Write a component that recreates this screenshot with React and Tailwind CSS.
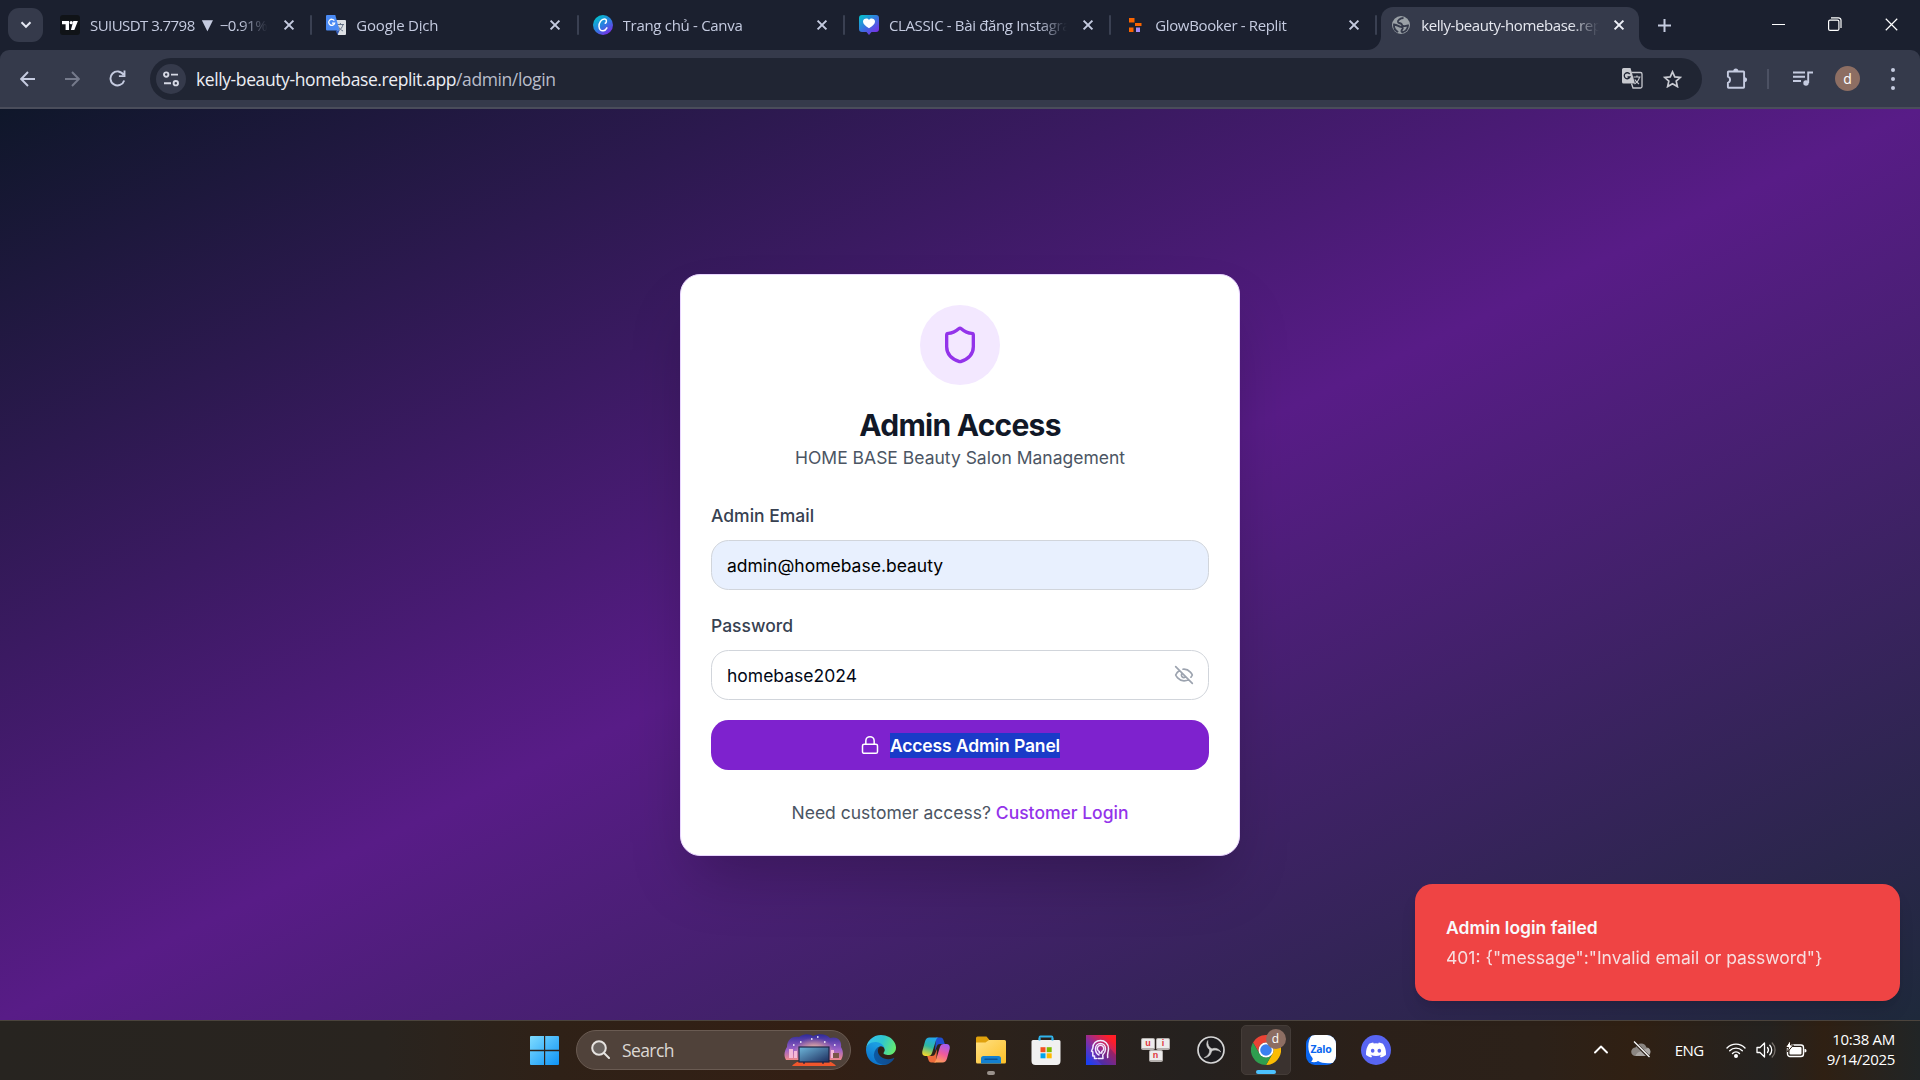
import React from "react";

const sys = "font-['Open_Sans','Noto_Sans',sans-serif]";

function Cross({ s = 10, w = 2, color = "#c5cbe0" }) {
  return (
    <svg width={s} height={s} viewBox="0 0 10 10" fill="none" stroke={color} strokeWidth={w} className="shrink-0 overflow-visible">
      <path d="M0.6 0.6L9.4 9.4M9.4 0.6L0.6 9.4" />
    </svg>
  );
}

function TradingViewIcon() {
  return (
    <svg width="20" height="20" viewBox="0 0 20 20">
      <rect width="20" height="20" rx="3" fill="#101317" />
      <path d="M2 6h7v9H5.600V9.300H2zM13.300 6h4.600l-3.600 9h-3.400z" fill="#fff" />
      <circle cx="11.200" cy="7.700" r="1.600" fill="#fff" />
    </svg>
  );
}

function TranslateIcon() {
  return (
    <svg width="20" height="20" viewBox="0 0 20 20">
      <path d="M8 5h11a1 1 0 0 1 1 1v13a1 1 0 0 1-1 1h-7z" fill="#dcdfe3" />
      <path d="M11 9.500h7M14.400 8v1.500M17 9.500c-.6 3-2.500 5-4.500 6.200M12.300 11.500c1 2 2.700 3.500 4.700 4.500" stroke="#667386" fill="none" strokeWidth="1" />
      <path d="M1 0h8.300l4.200 15.500H1a1 1 0 0 1-1-1V1a1 1 0 0 1 1-1z" fill="#4a8af4" />
      <path d="M9.500 15.500h4L11.500 20z" fill="#3056b0" />
      <path d="M8.300 5.700A3 3 0 1 0 8.600 8.200H6" stroke="#fff" strokeWidth="1.300" fill="none" />
    </svg>
  );
}

function CanvaIcon() {
  return (
    <svg width="20" height="20" viewBox="0 0 20 20">
      <defs>
        <linearGradient id="cv" x1="0.1" y1="0.1" x2="0.75" y2="1">
          <stop offset="0" stopColor="#00c4cc" />
          <stop offset="0.5" stopColor="#2a7fe0" />
          <stop offset="1" stopColor="#7d2ae8" />
        </linearGradient>
      </defs>
      <circle cx="10" cy="10" r="10" fill="url(#cv)" />
      <path d="M12.200 8.300c1.500-.6 2-4.300-.8-4.300C8.300 4 5.800 8 6 11.500c.2 3.200 2.200 4.600 4.200 4.300 1.800-.3 3-1.600 3.700-3" stroke="#fff" strokeWidth="1.500" fill="none" strokeLinecap="round" />
    </svg>
  );
}

function HeartIcon() {
  return (
    <svg width="20" height="20" viewBox="0 0 20 20">
      <defs>
        <linearGradient id="hc" x1="0" y1="0" x2="0.8" y2="1">
          <stop offset="0" stopColor="#00c9cc" />
          <stop offset="0.55" stopColor="#3b70e0" />
          <stop offset="1" stopColor="#7d2ae8" />
        </linearGradient>
      </defs>
      <path d="M3 0h14a3 3 0 0 1 3 3v11a3 3 0 0 1-3 3h-4.500L10 20l-2.500-3H3a3 3 0 0 1-3-3V3a3 3 0 0 1 3-3z" fill="url(#hc)" />
      <path d="M10 13.300C6 10.500 4 8.800 4 6.500 4 3.500 8.300 2.300 10 5c1.700-2.700 6-1.500 6 1.500 0 2.300-2 4-6 6.800z" fill="#fff" />
    </svg>
  );
}

function ReplitIcon() {
  return (
    <svg width="20" height="20" viewBox="0 0 20 20">
      <path d="M4 3h5.500v4.500H4zM10 8h6.500v3H10zM4 12.500h4.500V17H4z" fill="#fa6400" />
      <rect x="11" y="12.500" width="4" height="4.500" fill="#a78bfa" />
    </svg>
  );
}

function GlobeIcon() {
  return (
    <svg width="18" height="18" viewBox="0 0 18 18">
      <circle cx="9" cy="9" r="9" fill="#9aa0a6" />
      <path d="M11.500 2C8 2.200 5.500 4.200 6 6c.5 1.500 2.200 1 3.200 1.700C10.500 8.700 9.500 9.500 11 10c1.800.6 3.200-.6 5-.5-.3 3.300-2.500 6-5.800 6.700C8.800 15.500 9.700 14 10.500 13c.8-1.300-.3-2.200-1.800-2.300C6.500 10.500 5.500 8.800 2 8.500 1.700 12 3.500 14.800 6.200 16" fill="none" stroke="#353a4b" strokeWidth="1.900" />
    </svg>
  );
}

function Tab({ icon, title, cls }) {
  return (
    <div className="flex h-[34px] w-[266.3px] shrink-0 items-center pl-[14px]">
      <div className="flex w-5 shrink-0 justify-center">{icon}</div>
      <div className="ml-[10px] w-[178px] overflow-hidden [mask-image:linear-gradient(90deg,#000_84%,transparent)]">
        <span className={`block whitespace-nowrap text-[15px] leading-[22px] text-[#c5cbe0] ${cls}`}>{title}</span>
      </div>
      <div className="ml-4 flex"><Cross /></div>
      <div className="ml-auto h-5 w-[2px] rounded bg-[#3a4052]" />
    </div>
  );
}

function TabStrip() {
  return (
    <div className="flex h-[50px] shrink-0 items-center bg-[#1b202f]">
      <div className="ml-2 flex h-[34px] w-[35px] shrink-0 items-center justify-center rounded-[11px] bg-[#353a4b]">
        <svg width="12" height="8" viewBox="0 0 12 8" fill="none" stroke="#e4e7f2" strokeWidth="2"><path d="M1.500 1.300L6 5.800l4.500-4.500" /></svg>
      </div>
      <div className="ml-[3px] flex">
        <Tab icon={<TradingViewIcon />} title={<>SUIUSDT 3.7798 <span className="text-[19px] leading-none">▼</span> −0.91%</>} cls="tracking-[-0.55px]" />
        <Tab icon={<TranslateIcon />} title="Google Dịch" cls="tracking-[-0.2px]" />
        <Tab icon={<CanvaIcon />} title="Trang chủ - Canva" cls="tracking-[-0.3px]" />
        <Tab icon={<HeartIcon />} title="CLASSIC - Bài đăng Instagram" cls="tracking-[-0.35px]" />
        <div className="w-[263px]"><Tab icon={<ReplitIcon />} title="GlowBooker - Replit" cls="tracking-[-0.35px]" /></div>
      </div>
      <div className="relative z-10 ml-[7px] mt-[7px] flex h-[43px] w-[258px] shrink-0 items-center rounded-t-[12px] bg-[#353a4b] pb-[7px] pl-[11px]">
        <svg className="absolute bottom-0 left-[-14px]" width="14" height="14"><path d="M14 0v14H0A14 14 0 0 0 14 0z" fill="#353a4b" /></svg>
        <svg className="absolute bottom-0 right-[-14px]" width="14" height="14"><path d="M0 0v14H14A14 14 0 0 1 0 0z" fill="#353a4b" /></svg>
        <GlobeIcon />
        <div className="ml-[11px] w-[178px] overflow-hidden [mask-image:linear-gradient(90deg,#000_84%,transparent)]">
          <span className="block whitespace-nowrap text-[15px] leading-[22px] tracking-[-0.4px] text-[#e6e8f0]">kelly-beauty-homebase.replit.app</span>
        </div>
        <div className="ml-[15px] flex"><Cross color="#eef0f8" /></div>
      </div>
      <svg className="ml-[19px] shrink-0" width="13" height="13" viewBox="0 0 13 13" stroke="#c5cbe0" strokeWidth="2"><path d="M6.500 0v13M0 6.500h13" /></svg>
      <div className="ml-auto mr-[22px] flex items-center gap-[43px] pb-[2px]">
        <svg width="13" height="13" viewBox="0 0 13 13" stroke="#fff"><path d="M0 6.500h13" /></svg>
        <svg width="14" height="14" viewBox="0 0 14 14" fill="none" stroke="#fff" strokeWidth="1.200"><rect x="0.600" y="3.100" width="10.300" height="10.300" rx="1.500" /><path d="M3 .8h7.500a2.500 2.500 0 0 1 2.500 2.500V11" /></svg>
        <Cross s={13} w={0.9} color="#fff" />
      </div>
    </div>
  );
}

function Toolbar() {
  return (
    <div className="shrink-0 bg-[#1b202f]">
    <div className="flex h-[59px] items-center rounded-t-[9px] border-b-2 border-[#4a4d5b] bg-[#353a4b]">
      <svg className="ml-5 shrink-0" width="15" height="16" viewBox="0 0 15 16" fill="none" stroke="#c5cbe0" strokeWidth="1.900"><path d="M15 8H1.500M8 1L1.200 8 8 15" /></svg>
      <svg className="ml-[30px] shrink-0" width="15" height="16" viewBox="0 0 15 16" fill="none" stroke="#757a8b" strokeWidth="1.900"><path d="M0 8h13.500M7 1l6.800 7L7 15" /></svg>
      <svg className="ml-[29px] shrink-0" width="17" height="17" viewBox="0 0 17 17" fill="none" stroke="#c5cbe0" strokeWidth="1.900"><path d="M15.200 10.500A7 7 0 1 1 14.500 4.800M15.500 0.500v5.600H9.900" /></svg>
      <div className="ml-[24px] flex h-[42px] w-[1552px] shrink-0 items-center rounded-full bg-[#202533] pl-[6px]">
        <div className="flex size-[30px] items-center justify-center rounded-full bg-[#353a4b]">
          <svg width="16" height="16" viewBox="0 0 16 16" fill="none" stroke="#d5d8e4" strokeWidth="1.900"><circle cx="3.200" cy="3.600" r="2.200" /><path d="M8 3.600h7M1 12.200h7" /><circle cx="12.800" cy="12.200" r="2.200" /></svg>
        </div>
        <div className="ml-[10px] whitespace-nowrap pt-px text-[17.5px] leading-6 tracking-[-0.4px] text-[#eceef4]">kelly-beauty-homebase.replit.app<span className="text-[#b9bdca]">/admin/login</span></div>
        <svg className="ml-auto shrink-0" width="21" height="21" viewBox="0 0 21 21">
          <path d="M1.500 0h7l4.500 15.500H1.500A1.500 1.500 0 0 1 0 14V1.500A1.500 1.500 0 0 1 1.500 0z" fill="#c7c9cf" />
          <path d="M7.700 6A3 3 0 1 0 8 9H5.500" stroke="#202533" strokeWidth="1.300" fill="none" />
          <path d="M9.500 4.500h9a1.500 1.500 0 0 1 1.500 1.500v12.500a1.500 1.500 0 0 1-1.500 1.500h-7.500l-1.500-4.500" fill="none" stroke="#c7c9cf" strokeWidth="1.300" />
          <path d="M11.500 9h7M15 7.500V9M17.500 9c-.5 3-2.500 5.300-5 7M12.800 11.500c1 1.900 2.500 3.300 4.200 4.500" stroke="#c7c9cf" strokeWidth="1.200" fill="none" />
        </svg>
        <svg className="ml-[20px] mr-[20px] shrink-0" width="19" height="18" viewBox="0 0 19 18" fill="none" stroke="#c9cbd2" strokeWidth="1.700"><path d="M9.500 1.800l2.300 5.100 5.600.5-4.200 3.700 1.200 5.500-4.900-2.900-4.900 2.900 1.200-5.500-4.200-3.700 5.600-.5z" /></svg>
      </div>
      <svg className="ml-6 shrink-0" width="22" height="22" viewBox="0 0 22 22" fill="none" stroke="#c5cbe0" strokeWidth="1.900"><path d="M3 3.500h14.500a.6.6 0 0 1 .6.600v15a.6.6 0 0 1-.6.600H2.500a.6.6 0 0 1-.6-.6v-4.300a3.300 3.300 0 0 0 0-6.200V4.100a.6.6 0 0 1 .6-.6z" /><path d="M7.300 3a2.500 2.500 0 0 1 5 0zM18.600 9.200a2.500 2.500 0 0 1 0 5z" fill="#c5cbe0" stroke="none" /></svg>
      <div className="ml-[19px] h-5 w-[2px] bg-[#4c5163]" />
      <svg className="ml-[24px] shrink-0" width="20" height="16" viewBox="0 0 20 16" fill="none" stroke="#c5cbe0" strokeWidth="1.900"><path d="M0 1.500h12M0 5.800h12M0 10h8" /><path d="M15.200 12V1.500H20" /><circle cx="13" cy="12" r="2.700" fill="#c5cbe0" stroke="none" /></svg>
      <div className="ml-[22px] flex size-[25px] shrink-0 items-center justify-center rounded-full bg-[#8d6e63] text-[14px] leading-none text-white">d</div>
      <div className="ml-[31px] flex flex-col gap-[5px]">
        {[0, 1, 2].map((i) => <div key={i} className="size-1 rounded-full bg-[#c5cbe0]" />)}
      </div>
    </div>
    </div>
  );
}

function LoginCard() {
  return (
    <div className="flex h-[582px] w-[560px] flex-col items-center rounded-[20px] border border-[#e9d5ff] bg-white px-[30px] pt-[30px] shadow-[0_31px_62px_-15px_rgba(0,0,0,0.25)]">
      <div className="flex size-20 shrink-0 items-center justify-center rounded-full bg-[#f3e8ff]">
        <svg width="40" height="40" viewBox="0 0 24 24" fill="none" stroke="#9333ea" strokeWidth="2" strokeLinecap="round" strokeLinejoin="round"><path d="M20 13c0 5-3.500 7.500-7.660 8.950a1 1 0 0 1-.67-.01C7.500 20.500 4 18 4 13V6a1 1 0 0 1 1-1c2 0 4.500-1.200 6.240-2.720a1.170 1.170 0 0 1 1.520 0C14.510 3.810 17 5 19 5a1 1 0 0 1 1 1z" /></svg>
      </div>
      <h1 className="mt-5 text-[30px] font-bold leading-[40px] tracking-[-0.75px] text-[#111827]">Admin Access</h1>
      <p className="text-[17.5px] leading-[25px] text-[#4b5563]">HOME BASE Beauty Salon Management</p>
      <label className="mt-[33px] self-start text-[17.5px] font-medium leading-[25px] text-[#374151]">Admin Email</label>
      <div className="mt-3 flex h-[50px] w-full items-center rounded-[17.5px] border border-[#d1d5db] bg-[#e8f0fe] px-[15px] pt-[2px] text-[17.5px] text-black">admin@homebase.beauty</div>
      <label className="mt-[23px] self-start text-[17.5px] font-medium leading-[25px] text-[#374151]">Password</label>
      <div className="mt-3 flex h-[50px] w-full items-center justify-between rounded-[17.5px] border border-[#d1d5db] bg-white pl-[15px] pr-[14px] text-[17.5px] text-[#020817]">
        <span className="pt-[2px]">homebase2024</span>
        <svg width="20" height="20" viewBox="0 0 24 24" fill="none" stroke="#9ca3af" strokeWidth="2" strokeLinecap="round" strokeLinejoin="round"><path d="M9.880 9.880a3 3 0 1 0 4.240 4.240M10.730 5.080A10.430 10.430 0 0 1 12 5c7 0 10 7 10 7a13.160 13.160 0 0 1-1.670 2.680M6.610 6.610A13.526 13.526 0 0 0 2 12s3 7 10 7a9.740 9.740 0 0 0 5.390-1.610M2 2l20 20" /></svg>
      </div>
      <button className="mt-5 flex h-[50px] w-full items-center justify-center gap-[10px] rounded-[17.5px] bg-[#7e22ce] text-[17.5px] font-semibold text-white">
        <svg width="20" height="20" viewBox="0 0 24 24" fill="none" stroke="#fff" strokeWidth="1.800" strokeLinecap="round" strokeLinejoin="round"><rect width="18" height="11" x="3" y="11" rx="2" /><path d="M7 11V7a5 5 0 0 1 10 0v4" /></svg>
        <span className="bg-[#1a3bc8] leading-[25px] tracking-[-0.13px]">Access Admin Panel</span>
      </button>
      <p className="mt-[30px] text-[17.5px] leading-[25px] text-[#4b5563]">Need customer access? <span className="font-medium text-[#9333ea]">Customer Login</span></p>
    </div>
  );
}

function Toast() {
  return (
    <div className="absolute right-5 bottom-[19px] h-[117px] w-[485px] rounded-[17.5px] bg-[#ef4444] pl-[31px] pt-[31px] text-[#f8fafc] shadow-[0_12px_19px_-4px_rgba(0,0,0,0.1),0_5px_8px_-5px_rgba(0,0,0,0.1)]">
      <div className="text-[17.5px] font-semibold leading-[25px]">Admin login failed</div>
      <div className="mt-[5px] text-[17.5px] leading-[25px] opacity-85">401: {'{"message":"Invalid email or password"}'}</div>
    </div>
  );
}

function SearchArt() {
  return (
    <svg width="59" height="32" viewBox="0 0 59 32">
      <defs>
        <linearGradient id="sa" x1="0" y1="0" x2="0" y2="1"><stop offset="0" stopColor="#2d2a98" /><stop offset="0.6" stopColor="#9c62c8" /><stop offset="1" stopColor="#f08a8a" /></linearGradient>
        <radialGradient id="sg" cx="0.5" cy="0.6" r="0.5"><stop offset="0" stopColor="#ffd9a8" /><stop offset="1" stopColor="#ffb080" stopOpacity="0" /></radialGradient>
        <linearGradient id="st" x1="0" y1="0" x2="1" y2="1"><stop offset="0" stopColor="#6fb8dc" /><stop offset="1" stopColor="#1c2c5c" /></linearGradient>
      </defs>
      <path d="M2 26C-1 21 1 16 3 13 3 5 9 2 15 3c5-4 11-3 14-1 6-3 14-2 17 2 7-2 12 2 11 9 3 5 2 10 0 13z" fill="url(#sa)" />
      <ellipse cx="30" cy="14" rx="20" ry="13" fill="url(#sg)" />
      <path d="M5 15h4v9H5zM10 17h3v7h-3zM47 16h3v8h-3z" fill="#f4b8d8" />
      <path d="M49 19h6v5h-6z" fill="#7a5648" />
      <path d="M8 32c3-4 8-6 22-6s19 2 22 6z" fill="#f0562c" />
      <rect x="15" y="13" width="30" height="15" fill="url(#st)" stroke="#1c2344" strokeWidth="1.200" />
      <path d="M20 28v1.800M39 28v1.800" stroke="#1c2344" strokeWidth="1.500" />
      <path d="M16 8h1.500M27 5h1.500M33 3h1.500M40 8h1.500M50 11h1.500M9 11h1.500" stroke="#fff" strokeWidth="1.500" />
    </svg>
  );
}

function EdgeLogo() {
  return (
    <svg width="30" height="30" viewBox="0 0 256 256">
      <defs>
        <linearGradient id="e1" x1="0" y1="0.5" x2="1" y2="0.5"><stop offset="0" stopColor="#0c59a4" /><stop offset="1" stopColor="#114a8b" /></linearGradient>
        <linearGradient id="e2" x1="0.6" y1="0.2" x2="0.2" y2="1"><stop offset="0" stopColor="#1b9de2" /><stop offset="1" stopColor="#0a6cc8" /></linearGradient>
        <linearGradient id="e3" x1="0" y1="0.3" x2="1" y2="0.6"><stop offset="0" stopColor="#35c1f1" /><stop offset="0.5" stopColor="#2fc6cf" /><stop offset="1" stopColor="#66eb6e" /></linearGradient>
      </defs>
      <path d="M235.700 195.500a93.700 93.700 0 0 1-10.600 4.700 101.900 101.900 0 0 1-35.900 6.400c-47.300 0-88.500-32.500-88.500-74.300a31.500 31.500 0 0 1 16.400-27.300c-42.800 1.800-53.800 46.400-53.800 72.500 0 74 68.100 81.400 82.800 81.400 7.900 0 19.800-2.300 27-4.600l1.300-.4a128.300 128.300 0 0 0 66.600-52.800 4 4 0 0 0-5.300-5.600z" fill="url(#e1)" />
      <path d="M105.700 241.400A79.200 79.200 0 0 1 83 220.100a80.700 80.700 0 0 1 29.500-120c3.200-1.500 8.500-4.100 15.600-4a32.400 32.400 0 0 1 25.700 13 31.900 31.900 0 0 1 6.300 18.700c0-.2 24.500-79.600-80-79.600C36.200 48.200 0 89.800 0 126.400a130 130 0 0 0 12.100 56 128 128 0 0 0 156.400 67 75.500 75.500 0 0 1-62.800-8z" fill="url(#e2)" />
      <path d="M152.300 148.900c-.9 1-3.400 2.500-3.400 5.600 0 2.600 1.700 5.200 4.800 7.300 14.400 10.100 41.700 8.700 41.800 8.700a59.600 59.600 0 0 0 30.300-8.300A61.400 61.400 0 0 0 256 109.200c.3-22.400-8-37.300-11.300-43.900C223.500 23.900 177.700 0 128 0A128 128 0 0 0 0 126.200c.5-36.500 36.800-66 80-66 3.500 0 23.500.3 42 10.100 16.300 8.600 24.900 18.900 30.800 29.200 6.200 10.700 7.300 24.100 7.300 29.500 0 5.300-2.700 13.300-7.800 19.900z" fill="url(#e3)" />
    </svg>
  );
}

function CopilotLogo() {
  return (
    <svg width="28" height="26" viewBox="0 0 28 26">
      <defs>
        <linearGradient id="c1" x1="0.6" y1="0" x2="0.3" y2="1"><stop offset="0" stopColor="#22a7ee" /><stop offset="0.5" stopColor="#2fb8a0" /><stop offset="1" stopColor="#f3d62c" /></linearGradient>
        <linearGradient id="c2" x1="0.7" y1="0" x2="0.3" y2="1"><stop offset="0" stopColor="#a45bf0" /><stop offset="0.5" stopColor="#ef5a9c" /><stop offset="1" stopColor="#ffa256" /></linearGradient>
      </defs>
      <path d="M14 0.500h4.500c2 0 2.800 1.500 3.500 4l.8 2.500h-4.500c-2 0-3 .8-3.600 2.500L13 14z" fill="#1f4fd0" />
      <path d="M14 25.500H9.500c-2 0-2.800-1.500-3.500-4L5.200 19h4.500c2 0 3-.8 3.600-2.500L15 12z" fill="#ee6c3c" />
      <path d="M7.500.5H17c-2 0-2.700 1.500-3.400 4l-3.400 11c-.7 2.500-1.700 3.500-4.200 3.500H3.500C.5 19-.3 16.500.5 13.500L3 4.500C3.800 2 5 .5 7.500.5z" fill="url(#c1)" />
      <path d="M20.500 25.500H11c2 0 2.700-1.500 3.400-4l3.400-11C18.500 8 19.500 7 22 7h2.500c3 0 3.800 2.500 3 5.500l-2.500 9c-.8 2.500-2 4-4.500 4z" fill="url(#c2)" />
    </svg>
  );
}

function FolderLogo() {
  return (
    <svg width="30" height="28" viewBox="0 0 30 28">
      <defs><linearGradient id="f1" x1="0" y1="0" x2="1" y2="1"><stop offset="0" stopColor="#ffe083" /><stop offset="1" stopColor="#fcc027" /></linearGradient></defs>
      <path d="M0 2a1.500 1.500 0 0 1 1.500-1.500h9L13.500 4H24v6H0z" fill="#e0a10c" />
      <path d="M0 6.500h9.500L13 4h15.500A1.500 1.500 0 0 1 30 5.500V26a1.500 1.500 0 0 1-1.500 1.500h-27A1.500 1.500 0 0 1 0 26z" fill="url(#f1)" />
      <path d="M5 27.500v-5A2.500 2.500 0 0 1 7.500 20h15a2.500 2.500 0 0 1 2.500 2.500v5z" fill="#1380d0" />
      <path d="M9 23.300h12" stroke="#0a5497" strokeWidth="1.500" strokeLinecap="round" />
    </svg>
  );
}

function StoreLogo() {
  return (
    <svg width="30" height="30" viewBox="0 0 30 30">
      <path d="M8.500 6V2.500a1 1 0 0 1 1-1h11a1 1 0 0 1 1 1V6" fill="none" stroke="#30b4ec" strokeWidth="1.800" />
      <path d="M.5 6.500A1.500 1.500 0 0 1 2 5h26a1.500 1.500 0 0 1 1.500 1.500V26a4 4 0 0 1-4 4h-21a4 4 0 0 1-4-4z" fill="#f1f1f1" />
      <path d="M8.500 5.500V3M21.500 5.500V3" stroke="#30b4ec" strokeWidth="1.800" />
      <path d="M9.500 12.200h5v5h-5z" fill="#f25022" /><path d="M15.700 12.200h5v5h-5z" fill="#7fba00" />
      <path d="M9.500 18.300h5v5h-5z" fill="#00a4ef" /><path d="M15.700 18.300h5v5h-5z" fill="#ffb900" />
    </svg>
  );
}

function HeadLogo() {
  return (
    <svg width="30" height="30" viewBox="0 0 30 30" fill="none">
      <defs><linearGradient id="h1" x1="0.05" y1="0.9" x2="0.8" y2="0.1"><stop offset="0" stopColor="#1b3ff0" /><stop offset="0.5" stopColor="#8b2d9c" /><stop offset="1" stopColor="#ff1e28" /></linearGradient></defs>
      <rect width="30" height="30" fill="url(#h1)" />
      <path d="M9 23l7 7h14V20l-8-9z" fill="#3d1e66" opacity="0.3" />
      <g stroke="#f1eaff" strokeWidth="1.500" strokeLinejoin="round" strokeLinecap="round">
        <path d="M10.500 23.500h-2v-2.500H6.800v-4L5.500 16.200 6.800 13c0-4.500 3.300-7.500 7.700-7.500s8 3.300 8 8c0 3.500-1.500 5-.8 9" />
        <path d="M13 20c-2-1-3.500-3.200-3.500-6 0-3.300 2.200-5.400 5-5.400s5 2.100 5 5.400c0 2.800-1.300 4.600-2.800 6l.3 3.500h-5" />
        <path d="M13.300 18v-1.500a3.200 3.200 0 1 1 2.500 0V18z" />
      </g>
    </svg>
  );
}

function Key({ ch }) {
  return <div className="flex h-[12px] w-[14px] items-center justify-center rounded-[2px] border border-b-2 border-[#b5b0ae] bg-[#ececec] font-['Liberation_Sans',sans-serif] text-[9px] font-bold leading-none text-[#e0383c]">{ch}</div>;
}

function UniKeyLogo() {
  return (
    <div className="flex w-[30px] flex-col items-center">
      <div className="flex gap-px"><Key ch="u" /><Key ch="i" /></div>
      <Key ch="n" />
    </div>
  );
}

function ObsLogo() {
  return (
    <svg width="28" height="28" viewBox="0 0 28 28">
      <circle cx="14" cy="14" r="13" fill="#1d1c1f" stroke="#d6d6d6" strokeWidth="1.700" />
      {[0, 120, 240].map((a) => (
        <path key={a} transform={`rotate(${a} 14 14)`} d="M14.300 14.800C10.300 13 8.300 8.500 10.800 4.500 10.500 8.500 11.800 11.500 15 13z" fill="#cfcfcf" stroke="#cfcfcf" strokeWidth="0.500" strokeLinejoin="round" />
      ))}
    </svg>
  );
}

function ChromeLogo() {
  return (
    <svg width="30" height="30" viewBox="0 0 48 48">
      <path d="M3.215 12A24 24 0 0 1 44.785 12L24 12A12 12 0 0 0 13.608 30z" fill="#ea4335" />
      <path d="M44.785 12A24 24 0 0 1 24 48L34.392 30A12 12 0 0 0 24 12z" fill="#fbbc04" />
      <path d="M24 48A24 24 0 0 1 3.215 12L13.608 30A12 12 0 0 0 34.392 30z" fill="#2f9e4f" />
      <circle cx="24" cy="24" r="12" fill="#fff" />
      <circle cx="24" cy="24" r="9.300" fill="#3b80f0" />
    </svg>
  );
}

function ZaloLogo() {
  return (
    <div className="relative size-[30px] overflow-hidden rounded-[9px] bg-[#0a66f0]">
      <svg className="absolute inset-0" width="30" height="30" viewBox="0 0 30 30"><path d="M6 0h24v27c-6 2-14 1.500-18-1-2 1.500-5 1.500-7 .5 1.500-.8 2-2 1.500-3.500C1 17 1 6 6 0z" fill="#fff" /></svg>
      <span className="absolute left-[5px] top-[8px] text-[10.5px] font-bold leading-[12px] tracking-[-0.3px] text-[#0a66f0]">Zalo</span>
    </div>
  );
}

function DiscordLogo() {
  return (
    <div className="flex size-[30px] items-center justify-center rounded-full bg-[#5865f2]">
      <svg width="20" height="16" viewBox="0 0 127.140 96.360" fill="#fff"><path d="M107.700 8.070A105.150 105.150 0 0 0 81.470 0a72.060 72.060 0 0 0-3.360 6.830 97.680 97.680 0 0 0-29.110 0A72.370 72.370 0 0 0 45.640 0a105.890 105.890 0 0 0-26.250 8.090C2.790 32.650-1.710 56.600.540 80.210a105.730 105.730 0 0 0 32.170 16.150 77.700 77.700 0 0 0 6.890-11.110 68.420 68.420 0 0 1-10.850-5.180c.91-.66 1.800-1.340 2.660-2a75.570 75.570 0 0 0 64.320 0c.87.710 1.760 1.390 2.660 2a68.680 68.680 0 0 1-10.870 5.190 77 77 0 0 0 6.890 11.100 105.250 105.250 0 0 0 32.190-16.140c2.640-27.380-4.510-51.110-18.900-72.150zM42.450 65.690C36.180 65.690 31 60 31 53s5-12.740 11.430-12.740S54 46 53.890 53s-5.050 12.690-11.440 12.690zm42.240 0C78.410 65.690 73.250 60 73.250 53s5-12.740 11.440-12.740S96.230 46 96.120 53s-5.040 12.690-11.430 12.690z" /></svg>
    </div>
  );
}

function Slot({ children, running }) {
  return (
    <div className="relative flex h-[50px] w-[55px] shrink-0 items-center justify-center">
      {children}
      {running && <div className="absolute bottom-0 h-1 w-2 rounded-full bg-[#9a928c]" />}
    </div>
  );
}

function Taskbar() {
  return (
    <div className="flex h-[60px] shrink-0 items-center border-t border-[#4b443d] bg-[linear-gradient(90deg,#272420_0%,#29241f_20%,#2f2117_29%,#331f14_42%,#2c221b_52%,#25211f_62%,#2b2019_71%,#2c2119_80%,#302013_85%,#242220_92%,#2f2013_95%,#212526_100%)] pb-px">
      <svg className="ml-[530px] shrink-0" width="29" height="29" viewBox="0 0 29 29">
        <defs><linearGradient id="w" x1="0" y1="0" x2="1" y2="1"><stop offset="0" stopColor="#7fdcff" /><stop offset="1" stopColor="#0e93f5" /></linearGradient></defs>
        <path d="M1 0h13v13.800H0V1a1 1 0 0 1 1-1zM15.200 0H28a1 1 0 0 1 1 1v12.800H15.200zM0 15.200h14V29H1a1 1 0 0 1-1-1zM15.200 15.200H29V28a1 1 0 0 1-1 1H15.200z" fill="url(#w)" />
      </svg>
      <div className="ml-[17px] flex h-10 w-[275px] shrink-0 items-center rounded-full border border-[#6a5b52] bg-[#50423a] pl-[14px]">
        <svg className="-mt-px" width="19" height="19" viewBox="0 0 19 19" fill="#6b6460" stroke="#e6e3e0" strokeWidth="2"><circle cx="8" cy="8" r="6.800" /><path d="M13 13l5 5" strokeLinecap="round" /></svg>
        <span className="ml-[12px] text-[17.5px] leading-6 tracking-[-0.6px] text-[#dcd8d4]">Search</span>
        <div className="ml-auto mr-[7px]"><SearchArt /></div>
      </div>
      <div className="ml-[2px] flex">
        <Slot><EdgeLogo /></Slot>
        <Slot><CopilotLogo /></Slot>
        <Slot running><FolderLogo /></Slot>
        <Slot><StoreLogo /></Slot>
        <Slot><HeadLogo /></Slot>
        <Slot><UniKeyLogo /></Slot>
        <Slot><ObsLogo /></Slot>
        <Slot>
          <div className="relative flex size-[50px] items-center justify-center rounded-[5px] border border-[#443c38] bg-[#3a322f]">
            <ChromeLogo />
            <div className="absolute right-[4px] top-[3px] flex size-[20px] items-center justify-center rounded-full bg-[#8d6e63] text-[12px] leading-none text-white">d</div>
            <div className="absolute bottom-0 h-1 w-5 rounded-full bg-[#4cc2ff]" />
          </div>
        </Slot>
        <Slot><ZaloLogo /></Slot>
        <Slot><DiscordLogo /></Slot>
      </div>
      <div className="ml-auto flex shrink-0 items-center pb-px pr-[25px] text-white">
        <svg width="14" height="9" viewBox="0 0 14 9" fill="none" stroke="#fff" strokeWidth="1.900" strokeLinecap="round" strokeLinejoin="round"><path d="M1 7.500l6-6 6 6" /></svg>
        <svg className="ml-[23px]" width="20" height="17" viewBox="0 0 20 17"><path d="M4.500 15a4.300 4.300 0 0 1 0-8.600A5.800 5.800 0 0 1 15.500 6.500a4.300 4.300 0 0 1 .5 8.500z" fill="#8b8682" /><path d="M8 11l9-4a4.300 4.300 0 0 1-1 8H4.500C5 13 6.500 11.500 8 11z" fill="#a9a5a2" /><path d="M3 1l15.500 15.500" stroke="#2b2019" strokeWidth="3" /><path d="M3 .5L18.500 16" stroke="#fff" strokeWidth="1.300" /></svg>
        <span className="ml-[24px] w-[28px] whitespace-nowrap text-[15px] leading-5 tracking-[-0.5px]">ENG</span>
        <svg className="ml-[23px]" width="20" height="16" viewBox="0 0 20 16" fill="none" stroke="#fff" strokeWidth="1.400" strokeLinecap="round"><path d="M1 6a12.500 12.500 0 0 1 18 0M3.700 8.800a8.800 8.800 0 0 1 12.600 0M6.500 11.500a5 5 0 0 1 7 0" /><circle cx="10" cy="14" r="1.300" fill="#fff" /></svg>
        <svg className="ml-[10px]" width="20" height="18" viewBox="0 0 20 18" fill="none" stroke="#fff" strokeWidth="1.300" strokeLinecap="round" strokeLinejoin="round"><path d="M1 6.500h3L8.500 2v14L4 11.500H1z" /><path d="M11.500 6.500a4 4 0 0 1 0 5M13.800 4.200a7 7 0 0 1 0 9.600" /><path d="M16.200 2a10 10 0 0 1 0 14" stroke="#77706b" /></svg>
        <svg className="ml-[10px] overflow-visible" width="21" height="17" viewBox="0 0 21 17"><rect x="1.500" y="4" width="16" height="11.500" rx="2.500" fill="none" stroke="#fff" strokeWidth="1.400" /><rect x="3.500" y="6" width="12" height="7.500" rx="1" fill="#fff" /><path d="M18.500 8v3.500c1.500 0 2-.5 2-1.700S20 8 18.500 8z" fill="#fff" /><path d="M4.500-1L-.5 6.500h3L1.500 11 7.500 4H4.500z" fill="#fff" stroke="#2d2016" strokeWidth="1" /></svg>
        <div className="ml-[20px] pb-[2px] text-right text-[15px] leading-5 tracking-[-0.3px]"><div>10:38 AM</div><div>9/14/2025</div></div>
      </div>
    </div>
  );
}

export default function App() {
  return (
    <div className={`flex h-[1080px] w-[1920px] flex-col overflow-hidden bg-[#1b202f] ${sys}`}>
      <TabStrip />
      <Toolbar />
      <div className="relative flex h-[911px] shrink-0 flex-col items-center bg-[linear-gradient(to_bottom_right,#0f172a,#581c87_50%,#1e293b)] pt-[165px] font-['Inter',sans-serif]">
        <LoginCard />
        <Toast />
      </div>
      <Taskbar />
    </div>
  );
}
